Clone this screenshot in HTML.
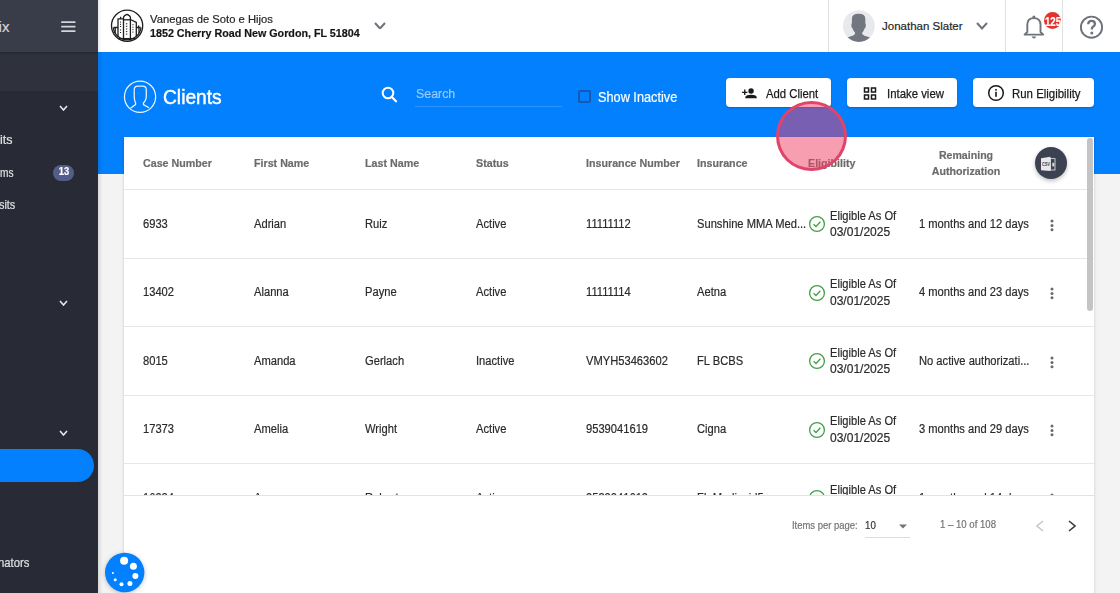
<!DOCTYPE html>
<html><head><meta charset="utf-8"><style>
html,body{margin:0;padding:0;width:1120px;height:593px;overflow:hidden;background:#f1f1f1;font-family:"Liberation Sans",sans-serif}
.t{position:absolute;white-space:nowrap;-webkit-text-stroke:0.2px}
</style></head><body>
<div style="position:absolute;left:0;top:0;width:98px;height:593px;background:#282b35"></div>
<div style="position:absolute;left:0;top:0;width:98px;height:52px;background:#393c49"></div>
<div style="position:absolute;left:0;top:52px;width:98px;height:39.4px;background:#2f323d"></div>
<div style="position:absolute;left:0;top:52px;width:98px;height:3px;background:linear-gradient(180deg,rgba(0,0,0,.22),rgba(0,0,0,0))"></div>
<div class="t" style="left:-1.4px;top:19.20px;font-size:15px;line-height:15px;color:#d3d5da;font-weight:400;">ix</div>

<svg style="position:absolute;left:60px;top:18px" width="18" height="16" viewBox="0 0 18 16"><g stroke="#d3d5da" stroke-width="1.7" stroke-linecap="round"><path d="M1.9 4.2 H14.8"/><path d="M1.9 8.6 H14.8"/><path d="M1.9 13.05 H14.8"/></g></svg>
<svg style="position:absolute;left:58.5px;top:104.5px" width="9" height="6" viewBox="-1 -1 9 6"><path d="M0 0 L3.5 4 L7 0" fill="none" stroke="#e6e7ea" stroke-width="1.6"/></svg>
<svg style="position:absolute;left:58.5px;top:299.5px" width="9" height="6" viewBox="-1 -1 9 6"><path d="M0 0 L3.5 4 L7 0" fill="none" stroke="#e6e7ea" stroke-width="1.6"/></svg>
<svg style="position:absolute;left:58.5px;top:429.5px" width="9" height="6" viewBox="-1 -1 9 6"><path d="M0 0 L3.5 4 L7 0" fill="none" stroke="#e6e7ea" stroke-width="1.6"/></svg>
<div class="t" style="left:0.3px;top:132.50px;font-size:13px;line-height:13px;color:#dfe0e4;font-weight:400;transform:scaleX(0.9615);transform-origin:left 0;">its</div>

<div class="t" style="left:-0.5px;top:165.50px;font-size:13px;line-height:13px;color:#dfe0e4;font-weight:400;transform:scaleX(0.7781);transform-origin:left 0;">ms</div>

<div style="position:absolute;left:53px;top:164.5px;width:21px;height:16px;border-radius:8px;background:#535e88"></div>
<div class="t" style="left:-236.4px;width:600px;text-align:center;top:167.03px;font-size:10px;line-height:10px;color:#ffffff;font-weight:700;transform:scaleX(0.9369);transform-origin:center 0;">13</div>

<div class="t" style="left:-0.8px;top:197.50px;font-size:13px;line-height:13px;color:#dfe0e4;font-weight:400;transform:scaleX(0.8359);transform-origin:left 0;">sits</div>

<div style="position:absolute;left:-20px;top:448.5px;width:114px;height:33px;border-radius:17px;background:#0380fe"></div>
<div class="t" style="left:-2.5px;top:556.00px;font-size:13px;line-height:13px;color:#dfe0e4;font-weight:400;transform:scaleX(0.8714);transform-origin:left 0;">nators</div>

<div style="position:absolute;left:98px;top:0;width:1022px;height:52px;background:#fff"></div>
<div style="position:absolute;left:98px;top:0;width:4px;height:52px;background:linear-gradient(90deg,rgba(0,0,0,.08),rgba(0,0,0,0))"></div>
<svg style="position:absolute;left:110px;top:9px" width="34" height="34" viewBox="0 0 34 34">
<g fill="none" stroke="#1e1e1e" stroke-width="1.3" stroke-linejoin="round">
<circle cx="17.1" cy="16.7" r="15.6"/>
<path d="M3.2 18.5 A14 14 0 0 0 31 18.5"/>
<path d="M13.5 30 V8.5 Q13.5 6.5 17 5.3 Q20.4 6.5 20.4 8.5 V30 Z"/>
<path d="M13.5 10.8 H20.4"/>
<path d="M13.5 9.8 H8 V28 M10.6 9.8 V7.8"/>
<path d="M20.4 10.5 L26.3 13.4 V28"/>
<path d="M8 18.5 H3.6 M5.2 18.5 V24"/>
<path d="M26.3 18.5 H30.5 M28.6 18.5 V16.5 M29 18.5 V24"/>
<path d="M8 29.6 H26.3"/>
</g>
<g fill="#1e1e1e">
<rect x="15.9" y="14.3" width="1.4" height="1"/><rect x="15.9" y="16.8" width="1.4" height="1"/><rect x="15.9" y="19.5" width="1.4" height="1"/><rect x="15.9" y="22.1" width="1.4" height="1"/><rect x="15.9" y="24.6" width="1.4" height="1"/>
<rect x="10" y="12.6" width="1.1" height="1"/><rect x="10" y="14.8" width="1.1" height="1"/><rect x="10" y="17" width="1.1" height="1"/><rect x="10" y="20.5" width="1.1" height="1"/><rect x="10" y="23" width="1.1" height="1"/>
<rect x="22.4" y="15.2" width="1.1" height="1"/><rect x="22.4" y="17.7" width="1.1" height="1"/><rect x="22.4" y="20.1" width="1.1" height="1"/><rect x="22.4" y="22.6" width="1.1" height="1"/>
</g>
</svg>
<div class="t" style="left:150px;top:13.87px;font-size:11.5px;line-height:11.5px;color:#262626;font-weight:400;transform:scaleX(0.9773);transform-origin:left 0;">Vanegas de Soto e Hijos</div>

<div class="t" style="left:150px;top:27.87px;font-size:11.5px;line-height:11.5px;color:#151515;font-weight:700;transform:scaleX(0.9330);transform-origin:left 0;">1852 Cherry Road New Gordon, FL 51804</div>

<svg style="position:absolute;left:374px;top:21.7px" width="12" height="7.5" viewBox="-1 -1 12 7.5"><path d="M0 0 L5.0 5.5 L10 0" fill="none" stroke="#6e727a" stroke-width="2"/></svg>
<div style="position:absolute;left:828px;top:0;width:1px;height:52px;background:#e0e0e0"></div>
<svg style="position:absolute;left:842px;top:9px" width="34" height="34" viewBox="0 0 34 34">
<defs><clipPath id="av"><circle cx="16.9" cy="17.1" r="15.9"/></clipPath></defs>
<circle cx="16.9" cy="17.1" r="15.9" fill="#e8e9ec"/>
<path clip-path="url(#av)" fill="#72767e" d="M9.9 9.5 Q9.9 4.8 16.6 4.8 Q23.3 4.8 23.3 9.5 V14.2 Q24.1 14.8 23.8 17 Q23.5 19.2 22.6 19.4 Q21.8 22 20.2 23.6 V25 Q21.5 26.8 26.5 28 Q29.5 29 31 31 V36 H2 V31 Q3.5 29 6.7 28 Q11.7 26.8 13 25 V23.6 Q11.4 22 10.6 19.4 Q9.7 19.2 9.4 17 Q9.1 14.8 9.9 14.2 Z"/>
</svg>
<div class="t" style="left:882px;top:21.27px;font-size:11.5px;line-height:11.5px;color:#262626;font-weight:400;">Jonathan Slater</div>

<svg style="position:absolute;left:975.8px;top:22px" width="12" height="7.5" viewBox="-1 -1 12 7.5"><path d="M0 0 L5.0 5.5 L10 0" fill="none" stroke="#6e727a" stroke-width="2"/></svg>
<div style="position:absolute;left:1005px;top:0;width:1px;height:52px;background:#e0e0e0"></div>
<div style="position:absolute;left:1062px;top:0;width:1px;height:52px;background:#e0e0e0"></div>
<svg style="position:absolute;left:1022px;top:14px" width="24" height="26" viewBox="0 0 24 26">
<path d="M5.3 18 V10.8 Q5.3 4.1 11.9 4.1 Q18.5 4.1 18.5 10.8 V18 L21.2 20.6 H2.6 Z" fill="none" stroke="#6e727a" stroke-width="1.9" stroke-linejoin="round"/>
<circle cx="11.9" cy="3" r="1.5" fill="#6e727a"/>
<path d="M9.6 22.6 H14.2 Q13.6 24.6 11.9 24.6 Q10.2 24.6 9.6 22.6 Z" fill="#6e727a"/>
</svg>
<div style="position:absolute;left:1043.9px;top:11.7px;width:17.4px;height:17.4px;border-radius:50%;background:#e2332f"></div>
<div class="t" style="left:752.7px;width:600px;text-align:center;top:15.74px;font-size:12px;line-height:12px;color:#ffffff;font-weight:700;transform:scaleX(0.8100);transform-origin:center 0;">125</div>

<svg style="position:absolute;left:1079px;top:15px" width="25" height="25" viewBox="0 0 25 25">
<circle cx="12.5" cy="12.2" r="10.6" fill="none" stroke="#6e727a" stroke-width="1.9"/>
<path d="M9.2 9.3 Q9.3 5.9 12.6 5.9 Q15.9 5.9 15.9 8.9 Q15.9 10.6 14.2 11.6 Q12.8 12.4 12.8 14.6" fill="none" stroke="#6e727a" stroke-width="2.3"/>
<circle cx="12.8" cy="18" r="1.5" fill="#6e727a"/>
</svg>
<div style="position:absolute;left:98px;top:52px;width:1022px;height:122px;background:#0380fe"></div>
<div style="position:absolute;left:98px;top:174px;width:1022px;height:419px;background:#f3f3f3"></div>
<div style="position:absolute;left:98px;top:52px;width:5px;height:541px;background:linear-gradient(90deg,rgba(0,0,0,.10),rgba(0,0,0,0))"></div>
<svg style="position:absolute;left:123px;top:80px" width="34" height="34" viewBox="0 0 34 34">
<g fill="none" stroke="#eaf5ff" stroke-width="1.25" stroke-linejoin="round">
<circle cx="17.05" cy="16.8" r="15.6"/>
<path d="M7.5 28.3 L12.6 24.6 V22.9 Q11.2 20.5 11.2 16 V9.7 Q11.2 6 14.9 6 H19.6 Q23.3 6 23.3 9.7 V15.8 Q23.3 20.5 20.4 22.9 V24.6 L26 27.8"/>
</g>
</svg>
<div class="t" style="left:163.3px;top:86.87px;font-size:20px;line-height:20px;color:#ffffff;font-weight:400;transform:scaleX(0.9599);transform-origin:left 0;-webkit-text-stroke:0.45px #fff;">Clients</div>

<svg style="position:absolute;left:380px;top:86px" width="19" height="19" viewBox="0 0 19 19">
<circle cx="8" cy="7" r="5.3" fill="none" stroke="#fff" stroke-width="2"/>
<path d="M11.6 10.8 L16 15.2" stroke="#fff" stroke-width="2.3" stroke-linecap="round"/>
</svg>
<div class="t" style="left:416px;top:87.30px;font-size:13px;line-height:13px;color:rgba(255,255,255,0.5);font-weight:400;transform:scaleX(0.9515);transform-origin:left 0;">Search</div>

<div style="position:absolute;left:415px;top:106px;width:147px;height:1px;background:rgba(255,255,255,0.16)"></div>
<div style="position:absolute;left:578px;top:90px;width:13px;height:13px;box-sizing:border-box;border:2px solid #1858b3;border-radius:2px"></div>
<div class="t" style="left:598px;top:89.65px;font-size:14px;line-height:14px;color:#ffffff;font-weight:400;transform:scaleX(0.9088);transform-origin:left 0;">Show Inactive</div>

<div style="position:absolute;left:726px;top:77.5px;width:105px;height:29px;background:#fff;border-radius:4px;box-shadow:0 1px 2px rgba(0,0,0,.2)"></div>
<div style="position:absolute;left:847px;top:77.5px;width:110px;height:29px;background:#fff;border-radius:4px;box-shadow:0 1px 2px rgba(0,0,0,.2)"></div>
<div style="position:absolute;left:973px;top:77.5px;width:121px;height:29px;background:#fff;border-radius:4px;box-shadow:0 1px 2px rgba(0,0,0,.2)"></div>
<svg style="position:absolute;left:740.5px;top:86px" width="16.5" height="13.5" viewBox="0 0 18 15">
<circle cx="11" cy="5.5" r="3" fill="#1a1a1a"/><path d="M4.5 13.5 Q4.5 9.8 11 9.8 Q17.5 9.8 17.5 13.5 Z" fill="#1a1a1a"/>
<path d="M1 7 H7 M4 4 V10" stroke="#1a1a1a" stroke-width="1.5"/>
</svg>
<div class="t" style="left:766px;top:87.30px;font-size:13px;line-height:13px;color:#1a1a1a;font-weight:500;transform:scaleX(0.8700);transform-origin:left 0;-webkit-text-stroke:0.25px #1a1a1a;">Add Client</div>

<svg style="position:absolute;left:863px;top:87px" width="14" height="13" viewBox="0 0 14 13">
<g fill="none" stroke="#1a1a1a" stroke-width="1.5"><rect x="1.5" y="1" width="4" height="4"/><rect x="8.5" y="1" width="4" height="4"/><rect x="1.5" y="8" width="4" height="4"/><rect x="8.5" y="8" width="4" height="4"/></g>
</svg>
<div class="t" style="left:887px;top:87.30px;font-size:13px;line-height:13px;color:#1a1a1a;font-weight:500;transform:scaleX(0.8756);transform-origin:left 0;-webkit-text-stroke:0.25px #1a1a1a;">Intake view</div>

<svg style="position:absolute;left:987px;top:84px" width="18" height="18" viewBox="0 0 18 18">
<circle cx="9" cy="9" r="7.3" fill="none" stroke="#1a1a1a" stroke-width="1.5"/>
<rect x="8.2" y="7.8" width="1.6" height="5" fill="#1a1a1a"/><rect x="8.2" y="5" width="1.6" height="1.6" fill="#1a1a1a"/>
</svg>
<div class="t" style="left:1012.4px;top:87.30px;font-size:13px;line-height:13px;color:#1a1a1a;font-weight:500;transform:scaleX(0.8789);transform-origin:left 0;-webkit-text-stroke:0.25px #1a1a1a;">Run Eligibility</div>

<div style="position:absolute;left:124px;top:137px;width:970px;height:470px;background:#fff;box-shadow:0 1px 3px rgba(0,0,0,.18)"></div>
<div class="t" style="left:143.4px;top:157.57px;font-size:11.5px;line-height:11.5px;color:#6b6b6b;font-weight:700;transform:scaleX(0.9300);transform-origin:left 0;">Case Number</div>

<div class="t" style="left:254.4px;top:157.57px;font-size:11.5px;line-height:11.5px;color:#6b6b6b;font-weight:700;transform:scaleX(0.9300);transform-origin:left 0;">First Name</div>

<div class="t" style="left:365.4px;top:157.57px;font-size:11.5px;line-height:11.5px;color:#6b6b6b;font-weight:700;transform:scaleX(0.9300);transform-origin:left 0;">Last Name</div>

<div class="t" style="left:475.9px;top:157.57px;font-size:11.5px;line-height:11.5px;color:#6b6b6b;font-weight:700;transform:scaleX(0.9300);transform-origin:left 0;">Status</div>

<div class="t" style="left:586.4px;top:157.57px;font-size:11.5px;line-height:11.5px;color:#6b6b6b;font-weight:700;transform:scaleX(0.9300);transform-origin:left 0;">Insurance Number</div>

<div class="t" style="left:697.4px;top:157.57px;font-size:11.5px;line-height:11.5px;color:#6b6b6b;font-weight:700;transform:scaleX(0.9300);transform-origin:left 0;">Insurance</div>

<div class="t" style="left:807.9px;top:157.57px;font-size:11.5px;line-height:11.5px;color:#6b6b6b;font-weight:700;transform:scaleX(0.9300);transform-origin:left 0;">Eligibility</div>

<div class="t" style="left:666px;width:600px;text-align:center;top:150.27px;font-size:11.5px;line-height:11.5px;color:#6b6b6b;font-weight:700;transform:scaleX(0.9218);transform-origin:center 0;">Remaining</div>

<div class="t" style="left:666px;width:600px;text-align:center;top:165.77px;font-size:11.5px;line-height:11.5px;color:#6b6b6b;font-weight:700;transform:scaleX(0.9258);transform-origin:center 0;">Authorization</div>

<div style="position:absolute;left:124px;top:137px;width:970px;height:358px;overflow:hidden">
<div style="position:absolute;left:-124px;top:-137px;width:1120px;height:593px">
<div style="position:absolute;left:124px;top:189.2px;width:970px;height:1px;background:#e6e6e6"></div>
<div class="t" style="left:143px;top:217.92px;font-size:12.5px;line-height:12.5px;color:#2a2a2a;font-weight:400;transform:scaleX(0.8930);transform-origin:left 0;">6933</div>

<div class="t" style="left:254px;top:217.92px;font-size:12.5px;line-height:12.5px;color:#2a2a2a;font-weight:400;transform:scaleX(0.8930);transform-origin:left 0;">Adrian</div>

<div class="t" style="left:365px;top:217.92px;font-size:12.5px;line-height:12.5px;color:#2a2a2a;font-weight:400;transform:scaleX(0.8930);transform-origin:left 0;">Ruiz</div>

<div class="t" style="left:475.5px;top:217.92px;font-size:12.5px;line-height:12.5px;color:#2a2a2a;font-weight:400;transform:scaleX(0.8930);transform-origin:left 0;">Active</div>

<div class="t" style="left:586px;top:217.92px;font-size:12.5px;line-height:12.5px;color:#2a2a2a;font-weight:400;transform:scaleX(0.8930);transform-origin:left 0;">11111112</div>

<div class="t" style="left:697px;top:217.92px;font-size:12.5px;line-height:12.5px;color:#2a2a2a;font-weight:400;transform:scaleX(0.8930);transform-origin:left 0;">Sunshine MMA Med...</div>

<svg style="position:absolute;left:808px;top:215.2px" width="18" height="18" viewBox="0 0 18 18">
<circle cx="9" cy="9" r="7.4" fill="none" stroke="#43a047" stroke-width="1.3"/><path d="M5.6 9.2 L8 11.5 L12.4 6.8" fill="none" stroke="#43a047" stroke-width="1.3"/></svg>
<div class="t" style="left:830.3px;top:209.62px;font-size:12.5px;line-height:12.5px;color:#2a2a2a;font-weight:400;transform:scaleX(0.8900);transform-origin:left 0;">Eligible As Of</div>

<div class="t" style="left:830.3px;top:226.22px;font-size:12.5px;line-height:12.5px;color:#2a2a2a;font-weight:400;transform:scaleX(0.9610);transform-origin:left 0;">03/01/2025</div>

<div class="t" style="left:918.6px;top:217.92px;font-size:12.5px;line-height:12.5px;color:#2a2a2a;font-weight:400;transform:scaleX(0.8930);transform-origin:left 0;">1 months and 12 days</div>

<svg style="position:absolute;left:1049.5px;top:218.7px" width="4" height="14" viewBox="0 0 4 14"><g fill="#6a6a6a"><circle cx="2" cy="2" r="1.5"/><circle cx="2" cy="6.4" r="1.5"/><circle cx="2" cy="10.8" r="1.5"/></g></svg>
<div style="position:absolute;left:124px;top:257.7px;width:970px;height:1px;background:#e6e6e6"></div>
<div class="t" style="left:143px;top:286.42px;font-size:12.5px;line-height:12.5px;color:#2a2a2a;font-weight:400;transform:scaleX(0.8930);transform-origin:left 0;">13402</div>

<div class="t" style="left:254px;top:286.42px;font-size:12.5px;line-height:12.5px;color:#2a2a2a;font-weight:400;transform:scaleX(0.8930);transform-origin:left 0;">Alanna</div>

<div class="t" style="left:365px;top:286.42px;font-size:12.5px;line-height:12.5px;color:#2a2a2a;font-weight:400;transform:scaleX(0.8930);transform-origin:left 0;">Payne</div>

<div class="t" style="left:475.5px;top:286.42px;font-size:12.5px;line-height:12.5px;color:#2a2a2a;font-weight:400;transform:scaleX(0.8930);transform-origin:left 0;">Active</div>

<div class="t" style="left:586px;top:286.42px;font-size:12.5px;line-height:12.5px;color:#2a2a2a;font-weight:400;transform:scaleX(0.8930);transform-origin:left 0;">11111114</div>

<div class="t" style="left:697px;top:286.42px;font-size:12.5px;line-height:12.5px;color:#2a2a2a;font-weight:400;transform:scaleX(0.8930);transform-origin:left 0;">Aetna</div>

<svg style="position:absolute;left:808px;top:283.7px" width="18" height="18" viewBox="0 0 18 18">
<circle cx="9" cy="9" r="7.4" fill="none" stroke="#43a047" stroke-width="1.3"/><path d="M5.6 9.2 L8 11.5 L12.4 6.8" fill="none" stroke="#43a047" stroke-width="1.3"/></svg>
<div class="t" style="left:830.3px;top:278.12px;font-size:12.5px;line-height:12.5px;color:#2a2a2a;font-weight:400;transform:scaleX(0.8900);transform-origin:left 0;">Eligible As Of</div>

<div class="t" style="left:830.3px;top:294.72px;font-size:12.5px;line-height:12.5px;color:#2a2a2a;font-weight:400;transform:scaleX(0.9610);transform-origin:left 0;">03/01/2025</div>

<div class="t" style="left:918.6px;top:286.42px;font-size:12.5px;line-height:12.5px;color:#2a2a2a;font-weight:400;transform:scaleX(0.8930);transform-origin:left 0;">4 months and 23 days</div>

<svg style="position:absolute;left:1049.5px;top:287.2px" width="4" height="14" viewBox="0 0 4 14"><g fill="#6a6a6a"><circle cx="2" cy="2" r="1.5"/><circle cx="2" cy="6.4" r="1.5"/><circle cx="2" cy="10.8" r="1.5"/></g></svg>
<div style="position:absolute;left:124px;top:326.2px;width:970px;height:1px;background:#e6e6e6"></div>
<div class="t" style="left:143px;top:354.92px;font-size:12.5px;line-height:12.5px;color:#2a2a2a;font-weight:400;transform:scaleX(0.8930);transform-origin:left 0;">8015</div>

<div class="t" style="left:254px;top:354.92px;font-size:12.5px;line-height:12.5px;color:#2a2a2a;font-weight:400;transform:scaleX(0.8930);transform-origin:left 0;">Amanda</div>

<div class="t" style="left:365px;top:354.92px;font-size:12.5px;line-height:12.5px;color:#2a2a2a;font-weight:400;transform:scaleX(0.8930);transform-origin:left 0;">Gerlach</div>

<div class="t" style="left:475.5px;top:354.92px;font-size:12.5px;line-height:12.5px;color:#2a2a2a;font-weight:400;transform:scaleX(0.8930);transform-origin:left 0;">Inactive</div>

<div class="t" style="left:586px;top:354.92px;font-size:12.5px;line-height:12.5px;color:#2a2a2a;font-weight:400;transform:scaleX(0.8930);transform-origin:left 0;">VMYH53463602</div>

<div class="t" style="left:697px;top:354.92px;font-size:12.5px;line-height:12.5px;color:#2a2a2a;font-weight:400;transform:scaleX(0.8930);transform-origin:left 0;">FL BCBS</div>

<svg style="position:absolute;left:808px;top:352.2px" width="18" height="18" viewBox="0 0 18 18">
<circle cx="9" cy="9" r="7.4" fill="none" stroke="#43a047" stroke-width="1.3"/><path d="M5.6 9.2 L8 11.5 L12.4 6.8" fill="none" stroke="#43a047" stroke-width="1.3"/></svg>
<div class="t" style="left:830.3px;top:346.62px;font-size:12.5px;line-height:12.5px;color:#2a2a2a;font-weight:400;transform:scaleX(0.8900);transform-origin:left 0;">Eligible As Of</div>

<div class="t" style="left:830.3px;top:363.22px;font-size:12.5px;line-height:12.5px;color:#2a2a2a;font-weight:400;transform:scaleX(0.9610);transform-origin:left 0;">03/01/2025</div>

<div class="t" style="left:918.6px;top:354.92px;font-size:12.5px;line-height:12.5px;color:#2a2a2a;font-weight:400;transform:scaleX(0.8930);transform-origin:left 0;">No active authorizati...</div>

<svg style="position:absolute;left:1049.5px;top:355.7px" width="4" height="14" viewBox="0 0 4 14"><g fill="#6a6a6a"><circle cx="2" cy="2" r="1.5"/><circle cx="2" cy="6.4" r="1.5"/><circle cx="2" cy="10.8" r="1.5"/></g></svg>
<div style="position:absolute;left:124px;top:394.7px;width:970px;height:1px;background:#e6e6e6"></div>
<div class="t" style="left:143px;top:423.42px;font-size:12.5px;line-height:12.5px;color:#2a2a2a;font-weight:400;transform:scaleX(0.8930);transform-origin:left 0;">17373</div>

<div class="t" style="left:254px;top:423.42px;font-size:12.5px;line-height:12.5px;color:#2a2a2a;font-weight:400;transform:scaleX(0.8930);transform-origin:left 0;">Amelia</div>

<div class="t" style="left:365px;top:423.42px;font-size:12.5px;line-height:12.5px;color:#2a2a2a;font-weight:400;transform:scaleX(0.8930);transform-origin:left 0;">Wright</div>

<div class="t" style="left:475.5px;top:423.42px;font-size:12.5px;line-height:12.5px;color:#2a2a2a;font-weight:400;transform:scaleX(0.8930);transform-origin:left 0;">Active</div>

<div class="t" style="left:586px;top:423.42px;font-size:12.5px;line-height:12.5px;color:#2a2a2a;font-weight:400;transform:scaleX(0.8930);transform-origin:left 0;">9539041619</div>

<div class="t" style="left:697px;top:423.42px;font-size:12.5px;line-height:12.5px;color:#2a2a2a;font-weight:400;transform:scaleX(0.8930);transform-origin:left 0;">Cigna</div>

<svg style="position:absolute;left:808px;top:420.7px" width="18" height="18" viewBox="0 0 18 18">
<circle cx="9" cy="9" r="7.4" fill="none" stroke="#43a047" stroke-width="1.3"/><path d="M5.6 9.2 L8 11.5 L12.4 6.8" fill="none" stroke="#43a047" stroke-width="1.3"/></svg>
<div class="t" style="left:830.3px;top:415.12px;font-size:12.5px;line-height:12.5px;color:#2a2a2a;font-weight:400;transform:scaleX(0.8900);transform-origin:left 0;">Eligible As Of</div>

<div class="t" style="left:830.3px;top:431.72px;font-size:12.5px;line-height:12.5px;color:#2a2a2a;font-weight:400;transform:scaleX(0.9610);transform-origin:left 0;">03/01/2025</div>

<div class="t" style="left:918.6px;top:423.42px;font-size:12.5px;line-height:12.5px;color:#2a2a2a;font-weight:400;transform:scaleX(0.8930);transform-origin:left 0;">3 months and 29 days</div>

<svg style="position:absolute;left:1049.5px;top:424.2px" width="4" height="14" viewBox="0 0 4 14"><g fill="#6a6a6a"><circle cx="2" cy="2" r="1.5"/><circle cx="2" cy="6.4" r="1.5"/><circle cx="2" cy="10.8" r="1.5"/></g></svg>
<div style="position:absolute;left:124px;top:463.2px;width:970px;height:1px;background:#e6e6e6"></div>
<div class="t" style="left:143px;top:491.92px;font-size:12.5px;line-height:12.5px;color:#2a2a2a;font-weight:400;transform:scaleX(0.8930);transform-origin:left 0;">16924</div>

<div class="t" style="left:254px;top:491.92px;font-size:12.5px;line-height:12.5px;color:#2a2a2a;font-weight:400;transform:scaleX(0.8930);transform-origin:left 0;">Amy</div>

<div class="t" style="left:365px;top:491.92px;font-size:12.5px;line-height:12.5px;color:#2a2a2a;font-weight:400;transform:scaleX(0.8930);transform-origin:left 0;">Roberts</div>

<div class="t" style="left:475.5px;top:491.92px;font-size:12.5px;line-height:12.5px;color:#2a2a2a;font-weight:400;transform:scaleX(0.8930);transform-origin:left 0;">Active</div>

<div class="t" style="left:586px;top:491.92px;font-size:12.5px;line-height:12.5px;color:#2a2a2a;font-weight:400;transform:scaleX(0.8930);transform-origin:left 0;">9539041619</div>

<div class="t" style="left:697px;top:491.92px;font-size:12.5px;line-height:12.5px;color:#2a2a2a;font-weight:400;transform:scaleX(0.8930);transform-origin:left 0;">FL Medicaid5</div>

<svg style="position:absolute;left:808px;top:489.2px" width="18" height="18" viewBox="0 0 18 18">
<circle cx="9" cy="9" r="7.4" fill="none" stroke="#43a047" stroke-width="1.3"/><path d="M5.6 9.2 L8 11.5 L12.4 6.8" fill="none" stroke="#43a047" stroke-width="1.3"/></svg>
<div class="t" style="left:830.3px;top:483.62px;font-size:12.5px;line-height:12.5px;color:#2a2a2a;font-weight:400;transform:scaleX(0.8900);transform-origin:left 0;">Eligible As Of</div>

<div class="t" style="left:830.3px;top:500.22px;font-size:12.5px;line-height:12.5px;color:#2a2a2a;font-weight:400;transform:scaleX(0.9610);transform-origin:left 0;">03/01/2025</div>

<div class="t" style="left:918.6px;top:491.92px;font-size:12.5px;line-height:12.5px;color:#2a2a2a;font-weight:400;transform:scaleX(0.8930);transform-origin:left 0;">1 months and 14 days</div>

<svg style="position:absolute;left:1049.5px;top:492.7px" width="4" height="14" viewBox="0 0 4 14"><g fill="#6a6a6a"><circle cx="2" cy="2" r="1.5"/><circle cx="2" cy="6.4" r="1.5"/><circle cx="2" cy="10.8" r="1.5"/></g></svg>
</div></div>
<div style="position:absolute;left:124px;top:495px;width:970px;height:1px;background:#e3e3e3"></div>
<div style="position:absolute;left:1087px;top:137.5px;width:5.5px;height:173px;border-radius:3px;background:#c4c4c4"></div>
<div style="position:absolute;left:1035px;top:147.2px;width:32.2px;height:32.2px;border-radius:50%;background:#3d4252;box-shadow:0 2px 4px rgba(0,0,0,.25)"></div>
<svg style="position:absolute;left:1040px;top:154px" width="22" height="20" viewBox="0 0 22 20">
<rect x="10.4" y="4.6" width="4.6" height="11.4" fill="none" stroke="#d8d9dc" stroke-width="0.9"/>
<path d="M1 4.2 L10.5 2.8 V17 L1 16.3 Z" fill="#e9e9ea"/>
<text x="5.9" y="12" font-size="4.8" font-family="Liberation Sans" font-weight="700" fill="#3d4150" text-anchor="middle" textLength="8" lengthAdjust="spacingAndGlyphs">CSV</text>
<rect x="12.3" y="8.8" width="2" height="3.6" fill="#d8d9dc"/>
</svg>
<div class="t" style="left:792px;top:520.31px;font-size:10.5px;line-height:10.5px;color:#737373;font-weight:400;transform:scaleX(0.8992);transform-origin:left 0;">Items per page:</div>

<div class="t" style="left:864.6px;top:519.67px;font-size:11.5px;line-height:11.5px;color:#333333;font-weight:400;transform:scaleX(0.8438);transform-origin:left 0;">10</div>

<svg style="position:absolute;left:898px;top:524px" width="10" height="5" viewBox="0 0 10 5"><path d="M1 0.5 H9 L5 4.5 Z" fill="#757575"/></svg>
<div style="position:absolute;left:865px;top:537px;width:45px;height:1px;background:#dcdcdc"></div>
<div class="t" style="left:940px;top:519.21px;font-size:10.5px;line-height:10.5px;color:#737373;font-weight:400;transform:scaleX(0.9135);transform-origin:left 0;">1 – 10 of 108</div>

<svg style="position:absolute;left:1035.6px;top:520.3px" width="8" height="12" viewBox="-1 -1 8 12"><path d="M6 0 L0 5 L6 10" fill="none" stroke="#c8c8c8" stroke-width="1.6"/></svg>
<svg style="position:absolute;left:1068px;top:520.3px" width="8" height="12" viewBox="-1 -1 8 12"><path d="M0 0 L6 5 L0 10" fill="none" stroke="#3a3a3a" stroke-width="1.6"/></svg>
<svg style="position:absolute;left:104px;top:552px;filter:drop-shadow(0 1px 2px rgba(0,0,0,.25))" width="42" height="42" viewBox="0 0 42 42">
<circle cx="20.7" cy="20.5" r="19.7" fill="#0380fe"/>
<g fill="#fff"><circle cx="20.1" cy="8.7" r="4"/><circle cx="29.4" cy="14.3" r="3.5"/><circle cx="31.4" cy="23.9" r="3"/><circle cx="25.9" cy="31.5" r="2.5"/><circle cx="17.5" cy="32.3" r="2"/><circle cx="11.2" cy="27.7" r="1.5"/><circle cx="8.9" cy="20.9" r="1"/></g>
</svg>
<div style="position:absolute;left:776.4px;top:100.6px;width:71px;height:70.6px;box-sizing:border-box;border-radius:50%;border:3.7px solid #e0446a;background:rgba(240,62,100,0.5)"></div>
</body></html>
